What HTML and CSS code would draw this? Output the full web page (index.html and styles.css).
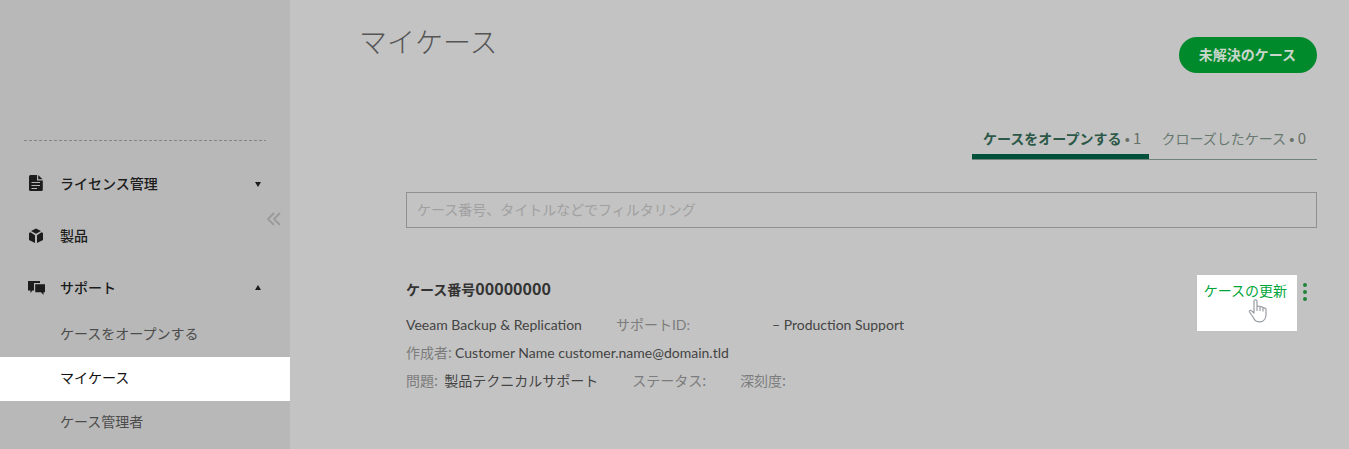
FILE: index.html
```html
<!DOCTYPE html>
<html lang="ja">
<head>
    <meta charset="UTF-8">
    <meta name="viewport" content="width=device-width, initial-scale=1.0">
    <title>マイケース</title>
    <link rel="stylesheet" href="styles.css">
</head>
<body>
    <aside class="sidebar">
        <nav class="menu">
            <a class="menu-item" href="#">
                <svg class="menu-icon" viewBox="0 0 18 18"><path fill="#1c1c1c" d="M3.500 1H10v5.500h5.800V15.500q0 1.500-1.500 1.500H3.500Q2 17 2 15.500v-13Q2 1 3.500 1z"/><path fill="#1c1c1c" d="M11.200 1l4.300 4.300h-4.300z"/><path stroke="#b8b8b8" d="M4.500 8.500h8.500M4.500 11.500h8.500M4.500 14.500h5.500"/></svg>
                <span>ライセンス管理</span>
                <svg class="menu-arrow" viewBox="0 0 8 8"><path fill="#1c1c1c" d="M1 3h6L4 8z"/></svg>
            </a>
            <a class="menu-item" href="#">
                <svg class="menu-icon" viewBox="0 0 18 18"><path fill="#1c1c1c" d="M9 2.500l5 2.500-5 2.800L4 5zM2 7l1.500-.8L8 9.300V17l-6-3zM16 7l-1.500-.8L10 9.300V17l6-3z"/></svg>
                <span>製品</span>
            </a>
            <a class="menu-item" href="#">
                <svg class="menu-icon" viewBox="0 0 18 18"><path fill="#1c1c1c" d="M1 3h12v2H7v7.500H5.500L3.500 15v-2.500H1z"/><path fill="#1c1c1c" d="M8.200 6.200H18v8h-1.500V17L14 14.200H8.200z"/></svg>
                <span>サポート</span>
                <svg class="menu-arrow" viewBox="0 0 8 8"><path fill="#1c1c1c" d="M1 7h6L4 2z"/></svg>
            </a>
            <a class="sub-item" href="#">ケースをオープンする</a>
            <a class="sub-item active" href="#">マイケース</a>
            <a class="sub-item" href="#">ケース管理者</a>
        </nav>
        <button class="collapse" type="button" aria-label="メニューを閉じる">
            <svg width="14" height="14" viewBox="0 0 14 14"><path fill="none" stroke="#9a9a9a" stroke-width="1.800" d="M7 1L1 7l6 6M13 1L7 7l6 6"/></svg>
        </button>
    </aside>

    <main class="content">
        <header class="page-header">
            <h1>マイケース</h1>
            <button class="open-case" type="button">未解決のケース</button>
        </header>

        <section class="cases">
            <div class="tabs">
                <a class="tab current" href="#">ケースをオープンする <span class="count">• 1</span></a>
                <a class="tab" href="#">クローズしたケース <span class="count">• 0</span></a>
            </div>

            <input class="filter" type="text" placeholder="ケース番号、タイトルなどでフィルタリング" aria-label="ケースのフィルタリング">

            <article class="case">
                <div class="case-info">
                    <h2>ケース番号<span class="number">00000000</span></h2>
                    <p><span class="latin product">Veeam Backup &amp; Replication</span><span class="label support">サポート<span class="latin">ID:</span></span><span class="latin">– Production Support</span></p>
                    <p><span class="label">作成者:</span> <span class="latin">Customer Name customer.name@domain.tld</span></p>
                    <p><span class="label">問題:</span>&nbsp; <span class="topic">製品テクニカルサポート</span><span class="label status">ステータス:</span><span class="label">深刻度:</span></p>
                </div>
                <div class="case-actions">
                    <a class="update" href="#">ケースの更新
                        <svg class="pointer" width="20" height="24" viewBox="0 0 20 24"><path fill="#fff" stroke="#999da3" stroke-width="1.200" stroke-linejoin="round" d="M6 14.500V2.300q0-1.500 1.500-1.500T9 2.300V9V7.500q1.400-.9 3 0V10V8q1.500-.7 3 .4V11V9q1.500-.5 3 1v6.500q-.5 4-3 5.500-3.500 1.600-7 0-2-1.500-3-4l-3.500-5q-.5-1.800 1.500-1.500 1.500.5 3 3M9 9v3M12 9.500v2.500M15 10.500v2"/></svg>
                    </a>
                    <button class="more" type="button" aria-label="その他">
                        <svg width="4" height="18" viewBox="0 0 4 18" fill="#20853a"><circle cx="2" cy="2" r="2"/><circle cx="2" cy="9" r="2"/><circle cx="2" cy="16" r="2"/></svg>
                    </button>
                </div>
            </article>
        </section>
    </main>
</body>
</html>
```
FILE: styles.css
```css
* { box-sizing: border-box; }
body { display: flex; min-height: 100vh; margin: 0; background-color: #c3c3c3; color: #444; font: 14px/20px "Noto Sans CJK JP", sans-serif; }
a { color: inherit; text-decoration: none; }
button { border: 0; padding: 0; background: none; font: inherit; cursor: pointer; }

.sidebar { position: relative; flex: none; width: 290px; padding-top: 140px; background-color: #b8b8b8; }
.menu::before { content: ""; display: block; height: 1px; margin: 0 24px 16px; background: repeating-linear-gradient(90deg, #858585 0 3px, transparent 3px 5px); }
.menu-item { display: flex; align-items: center; height: 52px; padding: 0 28px 0 27px; color: #1c1c1c; font-weight: 500; }
.menu-icon { width: 18px; height: 18px; margin-right: 15px; }
.menu-arrow { width: 8px; height: 8px; margin-left: auto; }
.sub-item { display: block; padding: 10px 60px 14px; color: #4c4c4c; }
.sub-item.active { background-color: #fff; color: #111; }
.collapse { position: absolute; top: 212px; right: 9px; height: 14px; line-height: 0; }

.content { flex: 1; padding: 21px 32px 0 69px; }
.page-header { display: flex; justify-content: space-between; }
h1 { margin: 0; color: #555; font-size: 28px; line-height: 40px; font-weight: 300; }
.open-case { height: 36px; margin-top: 16px; padding: 0 21px 2px 20px; border-radius: 18px; background-color: #008a2b; color: #c8d6cb; font-weight: 700; }

.cases { padding: 51px 0 0 47px; }
.tabs { display: flex; width: max-content; margin-left: auto; border-bottom: 1px solid #71827a; }
.tab { padding: 4px 11px 11px 12px; color: #687870; white-space: nowrap; }
.tab.current { padding: 4px 8px 6px 11px; border-bottom: 5px solid #00503a; color: #2c5848; font-weight: 700; }
.count { color: #687068; font-size: 15px; line-height: 1; font-weight: 400; }
.filter { display: block; width: 100%; height: 36px; margin-top: 32px; padding: 0 10px 3px; border: 1px solid #909090; background: none; color: #444; font: inherit; }
.filter::placeholder { color: #a0a0a0; }

.case { display: flex; justify-content: space-between; margin-top: 47px; }
h2 { margin: 4px 0 11px; color: #333; font-size: 14px; line-height: 20px; font-weight: 700; }
p { margin: 0; line-height: 28px; }
.number { font-size: 16px; line-height: 1; }
.latin { font-family: Lato, sans-serif; line-height: 1; }
.label { color: #7c7c7c; }
.product { margin-right: 34px; }
.support { margin-right: 82px; }
.topic { margin-right: 34px; }
.status { margin-right: 34px; }
.case-actions { display: flex; align-items: flex-start; padding-right: 10px; }
.update { position: relative; height: 56px; padding: 5px 10px 0 7px; background-color: #fff; color: #00a63a; }
.pointer { position: absolute; top: 24px; left: 51px; }
.more { height: 18px; margin: 8px 0 0 6px; line-height: 0; }
```
